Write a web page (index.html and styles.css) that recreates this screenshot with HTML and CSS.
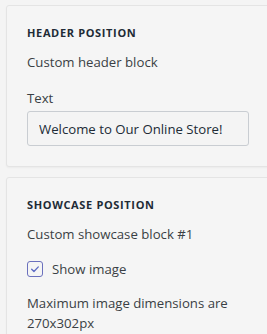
FILE: index.html
```html
<!DOCTYPE html>
<html lang="en">
  <head>
    <meta charset="UTF-8" />
    <meta name="viewport" content="width=device-width, initial-scale=1.0" />
    <title>Theme settings</title>
    <link rel="stylesheet" href="styles.css">
  </head>
  <body>
    <main class="sidebar">
      <section class="card">
        <h2 class="card-title">Header position</h2>
        <p class="block-name">Custom header block</p>
        <div class="field">
          <label for="header-text">Text</label>
          <input id="header-text" type="text" value="Welcome to Our Online Store!">
        </div>
      </section>
      <section class="card">
        <h2 class="card-title">Showcase position</h2>
        <p class="block-name">Custom showcase block #1</p>
        <label class="check">
          <span class="check-box">
            <svg viewBox="0 0 16 16" width="14" height="14"><path d="M4.2 8.3l2.6 2.6 5-5.3" fill="none" stroke="#5c6ac4" stroke-width="1.5" stroke-linecap="round" stroke-linejoin="round"/></svg>
          </span>
          Show image
        </label>
        <p class="help">Maximum image dimensions are 270x302px</p>
      </section>
    </main>
  </body>
</html>
```

FILE: styles.css
```css
* {
  margin: 0;
  padding: 0;
  box-sizing: border-box;
}

body {
  background-color: #f4f4f4;
  font-family: 'Open Sans', sans-serif;
  color: #212b36;
  overflow: hidden;
}

.sidebar {
  display: flex;
  flex-direction: column;
  gap: 10px;
  padding: 5px 0 0 6px;
  width: 270px;
}

.card {
  background-color: #f5f5f5;
  border: 1px solid #e4e4e4;
  border-radius: 3px;
  padding: 19px 20px 20px 20px;
  width: 264px;
  box-shadow: 0 1px 2px rgba(0, 0, 0, 0.04);
}

.card-title {
  font-size: 11px;
  font-weight: 700;
  text-transform: uppercase;
  letter-spacing: 0.65px;
  line-height: 16px;
}

.block-name {
  font-size: 13.2px;
  line-height: 20px;
  margin-top: 11px;
  color: #3a3f44;
}

.field {
  margin-top: 17px;
}

.field label {
  display: block;
  font-size: 13.2px;
  line-height: 18px;
  color: #3a3f44;
  margin-bottom: 4px;
}

.field input {
  display: block;
  width: 222px;
  height: 35px;
  padding: 0 11px;
  border: 1px solid #c9cdd2;
  border-radius: 3px;
  background-color: #f4f4f4;
  font-family: inherit;
  font-size: 13.2px;
  color: #212b36;
}

.check {
  display: flex;
  align-items: center;
  gap: 9px;
  margin-top: 15px;
  font-size: 13.2px;
  line-height: 20px;
  color: #3a3f44;
}

.check-box {
  display: flex;
  align-items: center;
  justify-content: center;
  width: 16px;
  height: 16px;
  border: 1.3px solid #6b70bd;
  border-radius: 3px;
}

.help {
  margin-top: 14px;
  font-size: 13.2px;
  line-height: 20px;
  color: #3a3f44;
  width: 205px;
}
```
